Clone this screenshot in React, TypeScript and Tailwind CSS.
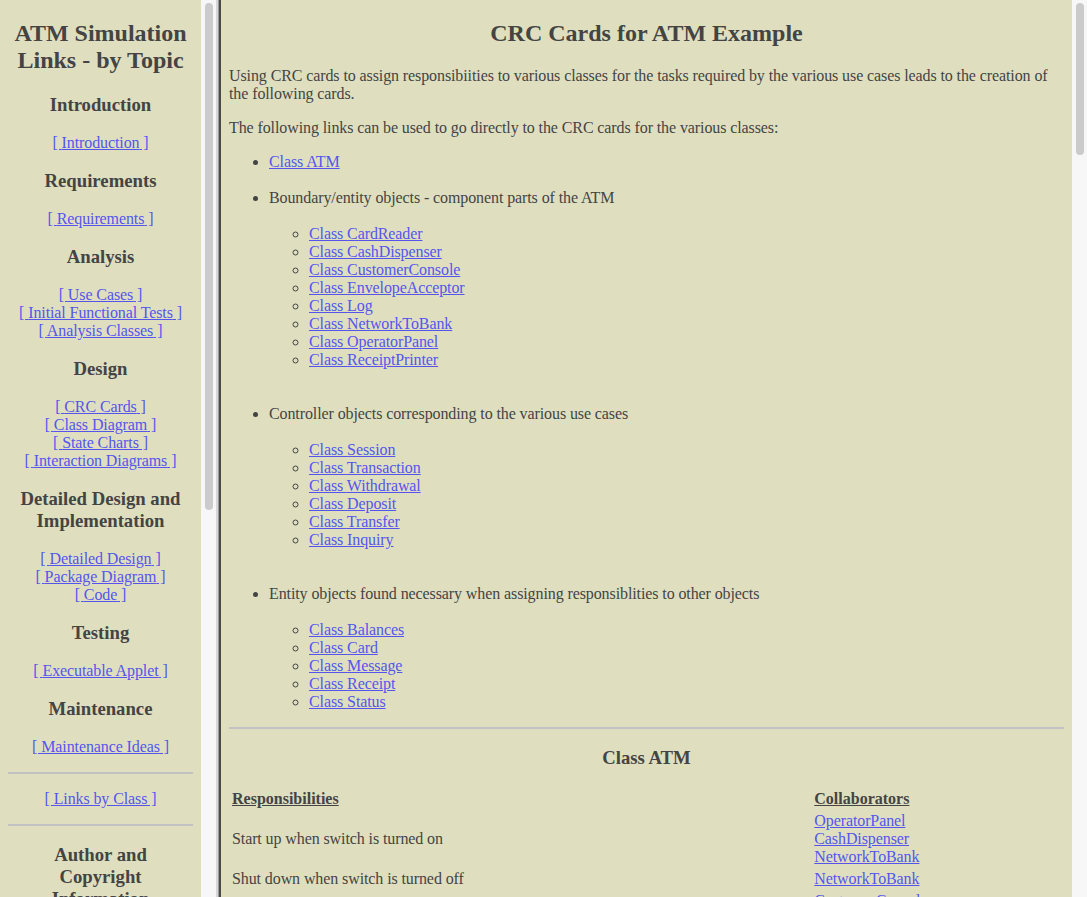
import React from "react";

const topics = [
  { title: ["Introduction"], links: ["Introduction"] },
  { title: ["Requirements"], links: ["Requirements"] },
  { title: ["Analysis"], links: ["Use Cases", "Initial Functional Tests", "Analysis Classes"] },
  { title: ["Design"], links: ["CRC Cards", "Class Diagram", "State Charts", "Interaction Diagrams"] },
  { title: ["Detailed Design and", "Implementation"], links: ["Detailed Design", "Package Diagram", "Code"] },
  { title: ["Testing"], links: ["Executable Applet"] },
  { title: ["Maintenance"], links: ["Maintenance Ideas"] },
];

const boundary = ["CardReader", "CashDispenser", "CustomerConsole", "EnvelopeAcceptor", "Log", "NetworkToBank", "OperatorPanel", "ReceiptPrinter"];
const controllers = ["Session", "Transaction", "Withdrawal", "Deposit", "Transfer", "Inquiry"];
const entities = ["Balances", "Card", "Message", "Receipt", "Status"];

const rows = [
  { resp: "Start up when switch is turned on", collab: ["OperatorPanel", "CashDispenser", "NetworkToBank"] },
  { resp: "Shut down when switch is turned off", collab: ["NetworkToBank"] },
  { resp: "Start a new session when card is inserted by customer", collab: ["CustomerConsole", "Session"] },
];

function Link({ children }: { children: React.ReactNode }) {
  return <a href="#" className="underline text-[#5555ee]">{children}</a>;
}

function Rule() {
  return <hr className="my-2 h-[2px] border-0 bg-[#c2c2c2]" />;
}

function Scrollbar({ thumb }: { thumb: string }) {
  return (
    <div className="w-[15px] shrink-0 bg-[#f7f7f7] pl-[4px] pr-[3px] pt-[3px]">
      <div className={`${thumb} w-[8px] rounded-full bg-[#cbcbcb]`} />
    </div>
  );
}

export default function App() {
  return (
    <div className="flex h-screen overflow-hidden bg-[#dfdfbf] font-['Liberation_Serif',serif] text-[16px] leading-[normal] tracking-[-0.1px] text-[#444]">
      {/* left frame: topics */}
      <div className="w-[201px] shrink-0 overflow-hidden px-2 text-center">
        <h2 className="mt-[19.92px] mb-[19.92px] text-[24px] font-bold tracking-normal">ATM Simulation Links - by Topic</h2>
        {topics.map((t) => (
          <div key={t.title[0]}>
            <h3 className="my-[18px] text-[18.72px] font-bold tracking-normal">
              {t.title.map((line) => (
                <div key={line}>{line}</div>
              ))}
            </h3>
            <p className="my-4">
              {t.links.map((l) => (
                <span key={l} className="block">
                  <Link>[ {l} ]</Link>
                </span>
              ))}
            </p>
          </div>
        ))}
        <Rule />
        <p className="my-4">
          <Link>[ Links by Class ]</Link>
        </p>
        <Rule />
        <h3 className="my-[18px] text-[18.72px] font-bold tracking-normal">
          Author and
          <br />
          Copyright
          <br />
          Information
        </h3>
      </div>
      <Scrollbar thumb="h-[507px]" />

      {/* frame border */}
      <div className="w-[2px] shrink-0 bg-[#d6d6d6]" />
      <div className="w-[1px] shrink-0 bg-[#9c9c9c]" />
      <div className="w-[2px] shrink-0 bg-[#4a4a4a]" />

      {/* right frame: CRC cards */}
      <div className="flex-1 overflow-hidden px-2">
        <h2 className="mt-[19.92px] mb-[19.92px] text-center text-[24px] font-bold tracking-normal">CRC Cards for ATM Example</h2>
        <p className="my-4">
          Using CRC cards to assign responsibiities to various classes for the tasks required by the various use cases leads to the creation of the following cards.
        </p>
        <p className="my-4">The following links can be used to go directly to the CRC cards for the various classes:</p>
        <ul className="my-4 list-disc pl-10">
          <li>
            <Link>Class ATM</Link>
          </li>
          <li className="mt-[18px]">
            Boundary/entity objects - component parts of the ATM
            <ul className="mt-[18px] list-[circle] pl-10">
              {boundary.map((c) => (
                <li key={c}>
                  <Link>Class {c}</Link>
                </li>
              ))}
            </ul>
          </li>
          <li className="mt-[36px]">
            Controller objects corresponding to the various use cases
            <ul className="mt-[18px] list-[circle] pl-10">
              {controllers.map((c) => (
                <li key={c}>
                  <Link>Class {c}</Link>
                </li>
              ))}
            </ul>
          </li>
          <li className="mt-[36px]">
            Entity objects found necessary when assigning responsiblities to other objects
            <ul className="mt-[18px] list-[circle] pl-10">
              {entities.map((c) => (
                <li key={c}>
                  <Link>Class {c}</Link>
                </li>
              ))}
            </ul>
          </li>
        </ul>
        <Rule />
        <h3 className="my-[18px] text-center text-[18.72px] font-bold tracking-normal">Class ATM</h3>
        <table className="w-full border-separate border-spacing-[2px]">
          <tbody>
            <tr>
              <td className="w-[70%] p-[1px] align-middle font-bold underline tracking-normal">Responsibilities</td>
              <td className="p-[1px] align-middle font-bold underline tracking-normal">Collaborators</td>
            </tr>
            {rows.map((r) => (
              <tr key={r.resp}>
                <td className="p-[1px] align-middle">{r.resp}</td>
                <td className="p-[1px] align-middle">
                  {r.collab.map((c) => (
                    <div key={c}>
                      <Link>{c}</Link>
                    </div>
                  ))}
                </td>
              </tr>
            ))}
          </tbody>
        </table>
      </div>
      <Scrollbar thumb="h-[152px]" />
    </div>
  );
}
